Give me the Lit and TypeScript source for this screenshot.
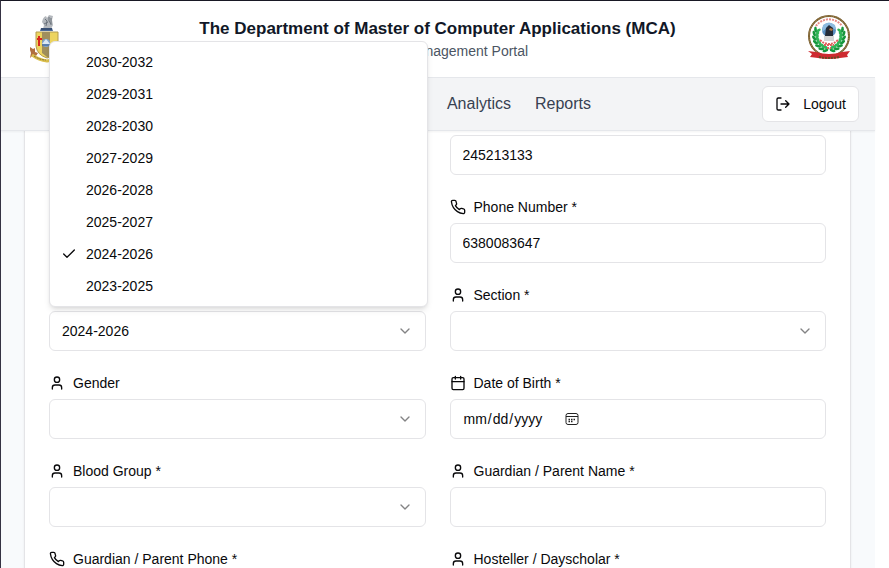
import { LitElement, html, css, svg, nothing } from "lit";
import { customElement, state } from "lit/decorators.js";

const shapes = {
  user: svg`<path d="M19 21v-2a4 4 0 0 0-4-4H9a4 4 0 0 0-4 4v2"/><circle cx="12" cy="7" r="4"/>`,
  phone: svg`<path d="M22 16.92v3a2 2 0 0 1-2.18 2 19.79 19.79 0 0 1-8.63-3.07 19.5 19.5 0 0 1-6-6 19.79 19.79 0 0 1-3.07-8.67A2 2 0 0 1 4.11 2h3a2 2 0 0 1 2 1.72 12.84 12.84 0 0 0 .7 2.81 2 2 0 0 1-.45 2.11L8.09 9.91a16 16 0 0 0 6 6l1.27-1.27a2 2 0 0 1 2.11-.45 12.84 12.84 0 0 0 2.81.7A2 2 0 0 1 22 16.92z"/>`,
  calendar: svg`<path d="M8 2v4M16 2v4M3 10h18"/><rect width="18" height="18" x="3" y="4" rx="2"/>`,
  logout: svg`<path d="M9 21H5a2 2 0 0 1-2-2V5a2 2 0 0 1 2-2h4M16 17l5-5-5-5M21 12H9"/>`,
  chevron: svg`<path d="m6 9 6 6 6-6"/>`,
  check: svg`<path d="M20 6 9 17l-5-5"/>`,
};

type IconName = keyof typeof shapes;

const icon = (name: IconName, extra = "") =>
  html`<svg class="icon ${extra}" viewBox="0 0 24 24" aria-hidden="true">${shapes[name]}</svg>`;

interface Field {
  id: string;
  label?: string;
  icon?: IconName;
  kind: "text" | "select" | "date" | "batch";
  value?: string;
}

const fields: Field[] = [
  { id: "register", kind: "text", value: "245213133" },
  { id: "phone", label: "Phone Number *", icon: "phone", kind: "text", value: "6380083647" },
  { id: "batch", kind: "batch" },
  { id: "section", label: "Section *", icon: "user", kind: "select" },
  { id: "gender", label: "Gender", icon: "user", kind: "select" },
  { id: "dob", label: "Date of Birth *", icon: "calendar", kind: "date" },
  { id: "blood", label: "Blood Group *", icon: "user", kind: "select" },
  { id: "guardian", label: "Guardian / Parent Name *", icon: "user", kind: "text" },
  { id: "guardian-phone", label: "Guardian / Parent Phone *", icon: "phone", kind: "text" },
  { id: "residence", label: "Hosteller / Dayscholar *", icon: "user", kind: "select" },
];

const batches = [
  "2030-2032", "2029-2031", "2028-2030", "2027-2029",
  "2026-2028", "2025-2027", "2024-2026", "2023-2025",
];

// Coat of arms: lion crest over a quartered shield with a ribbon below.
const universityCrest = html`
  <svg class="crest" viewBox="-4 1 40 48" role="img" aria-label="University crest">
    <path d="M14 8q1-5 4-6l1 2 2-3 4 1-1 4 1 5-2 4h-8l1-4z" fill="#b4b8bd"/>
    <path d="M17 5l2 2-1 5M21 3v4l2 3M16 10l4-2M23 4v7" stroke="#6b727b" fill="none"/>
    <path d="M13 14h11l1 3H12z" fill="#4c6a99"/>
    <path d="M13 15h11" stroke="#26374f"/>
    <path d="M8 18h22v14q-2 10-11 12Q9 41 8 32z" fill="#edd45f" stroke="#b39c50"/>
    <path d="M14 18h8v25h-3l-5-4z" fill="#a08f5c"/>
    <path d="M11 22v10M9 25h5" stroke="#d8281e" stroke-width="2"/>
    <circle cx="18" cy="29" r="4" fill="#7ea5cf"/>
    <path d="M14 30l4-5 4 5z" fill="#dce8f2"/>
    <path d="M14 31h8" stroke="#36598c"/>
    <path d="M2 33l3 2 2-1v4l3 1-2 3-3-1-3 3 1-5-1-3z" fill="#b0703f"/>
    <path d="M4 41q7 5 15 6 8-1 14-6" fill="none" stroke="#dcc04c" stroke-width="3"/>
    <path d="M6 42q6 4 12 4" fill="none" stroke="#7c6e30" stroke-dasharray="2 1"/>
  </svg>`;

const leaves = [0, 1, 2, 3, 4, 5, 6];
const wreathSide = svg`
  ${leaves.map((n) => {
    const turn = 14 + n * 17;
    return svg`<g transform="rotate(${turn} 22 22)">
      <ellipse cx="22" cy="34" rx="3" ry="1.4" transform="rotate(28 22 34)" fill="#2fb457"/>
      <ellipse cx="22" cy="37" rx="3" ry="1.4" transform="rotate(-28 22 37)" fill="#16963c"/>
    </g>`;
  })}`;

// Round seal: gold rim, laurel wreath, blue globe and red ribbon.
const collegeSeal = html`
  <svg class="seal" viewBox="0 0 44 50" role="img" aria-label="College seal">
    <circle cx="22" cy="22" r="20" fill="#fff" stroke="#70572b" stroke-width="2"/>
    <circle cx="22" cy="22" r="20" fill="none" stroke="#bd9c5d" stroke-dasharray="1 1"/>
    <path d="M9 12a16 16 0 0 1 26 0" fill="none" stroke="#e88a86" stroke-width="2" stroke-dasharray="2 1"/>
    ${svg`<g>${wreathSide}</g><g transform="translate(44 0) scale(-1 1)">${wreathSide}</g>`}
    <circle cx="22" cy="16" r="7" fill="#5b8fc1"/>
    <path d="M16 11q6-5 12 0l1 5-5-3-4 1-5 4z" fill="#8dbbdf"/>
    <path d="M19 14l3-3 4 3v8h-8z" fill="#252c38"/>
    <path d="M23 14l3 1-1 2-3-1z" fill="#b87541"/>
    <path d="M17 22h10v5H17z" fill="#d6d6d6"/>
    <path d="M13 26q4 4 9 4t9-4M17 31h10M20 34h4" fill="none" stroke="#e0605d" stroke-width="2" stroke-dasharray="2 1"/>
    <path d="M1 37l8 1q13 4 26 0l8-1-3 4 1 2-8 1q-11 2-22 0l-8-1 2-3z" fill="#ce2a30"/>
    <path d="M12 43q10 2 20 0" fill="none" stroke="#6c4925" stroke-width="2" stroke-dasharray="2 1"/>
  </svg>`;

@customElement("app-root")
export class AppRoot extends LitElement {
  @state() private batch = "2024-2026";
  @state() private menuOpen = true;

  static styles = css`
    :host {
      display: block;
      box-sizing: border-box;
      height: 100vh;
      overflow: hidden;
      padding-right: 14px;
      background: #fff;
      color: #09090b;
      font: 14px/20px "Liberation Sans", Arial, sans-serif;
    }
    :host::after {
      content: "";
      position: fixed;
      inset: 0;
      z-index: 3;
      border-top: 1px solid #181824;
      border-left: 1px solid #353243;
      pointer-events: none;
    }
    * { box-sizing: border-box; }
    .icon {
      flex: none;
      width: 16px;
      height: 16px;
      fill: none;
      stroke: currentColor;
      stroke-width: 2;
      stroke-linecap: round;
      stroke-linejoin: round;
    }
    .top { position: relative; z-index: 1; }
    .banner {
      display: flex;
      align-items: center;
      justify-content: space-between;
      height: 78px;
      padding: 0 24px;
      background: #fff;
      border-bottom: 1px solid #e5e7eb;
    }
    .logo { display: flex; width: 44px; }
    .crest { width: 40px; height: 48px; }
    .seal { width: 44px; height: 50px; }
    .titles { text-align: center; }
    .title {
      margin: 0;
      color: #111827;
      font-size: 17px;
      line-height: 24px;
      font-weight: 700;
    }
    .subtitle { margin: 0; color: #4b5563; line-height: 20px; }
    .bar {
      display: grid;
      grid-template-columns: 1fr auto 1fr;
      align-items: center;
      height: 53px;
      padding: 0 16px;
      background: #f3f4f6;
      border-bottom: 1px solid #e5e7eb;
      box-shadow: 0 1px 2px rgb(0 0 0 / 5%);
    }
    .links {
      grid-column: 2;
      display: flex;
      justify-content: flex-end;
      gap: 24px;
      min-width: 307px;
    }
    .link { color: #374151; font-size: 16px; line-height: 24px; text-decoration: none; }
    .logout {
      justify-self: end;
      display: flex;
      align-items: center;
      gap: 12px;
      height: 36px;
      padding: 0 12px;
      border: 1px solid #e4e4e7;
      border-radius: 6px;
      background: #fff;
      color: inherit;
      font: inherit;
    }
    .page { padding: 0 24px; background: #f8fafc; }
    /* The form is scrolled so that its first labels sit under the nav bar. */
    .card {
      display: grid;
      grid-template-columns: 1fr 1fr;
      gap: 24px;
      margin-top: -45px;
      padding: 24px;
      background: #fff;
      border: 1px solid #e4e4e7;
      border-radius: 8px;
      box-shadow: 0 1px 2px rgb(0 0 0 / 8%);
    }
    .field {
      position: relative;
      display: grid;
      grid-template-rows: 16px 40px;
      gap: 8px;
      min-width: 0;
    }
    .right { grid-column: 2; }
    .label { display: flex; align-items: center; gap: 8px; line-height: 16px; }
    .box { position: relative; grid-row: 2; }
    .control {
      width: 100%;
      height: 40px;
      padding: 8px 12px;
      border: 1px solid #e4e4e7;
      border-radius: 6px;
      background: #fff;
      color: inherit;
      font: inherit;
      appearance: none;
      outline: none;
    }
    .date { display: flex; }
    .date::-webkit-calendar-picker-indicator {
      background: url("data:image/svg+xml,%3Csvg xmlns='http://www.w3.org/2000/svg' viewBox='0 0 14 14' fill='none' stroke='%23222'%3E%3Crect x='1' y='1.5' width='12' height='11' rx='2'/%3E%3Cpath d='M1 4.5h12'/%3E%3Cpath d='M6 7.5h1.5M8.5 7.5H10M3.500 7.500H5M3.500 9.500H5M6 9.500h1.5' stroke-width='1.5'/%3E%3C/svg%3E") center / 14px 14px no-repeat;
    }
    .arrow {
      position: absolute;
      top: 12px;
      right: 13px;
      opacity: 0.5;
      pointer-events: none;
    }
    .menu {
      position: absolute;
      z-index: 2;
      left: 0;
      right: -2px;
      bottom: 44px;
      padding: 4px;
      background: #fff;
      border: 1px solid #e4e4e7;
      border-radius: 6px;
      box-shadow: 0 4px 6px -1px rgb(0 0 0 / 10%), 0 2px 4px -2px rgb(0 0 0 / 10%);
    }
    .option {
      display: flex;
      align-items: center;
      gap: 10px;
      width: 100%;
      height: 32px;
      padding: 0 8px;
      border: 0;
      border-radius: 4px;
      background: none;
      color: inherit;
      font: inherit;
    }
    .option:hover { background: #f4f4f5; }
    .mark { display: flex; justify-content: center; width: 14px; }
  `;

  private choose(value: string) {
    this.batch = value;
    this.menuOpen = false;
  }

  private openMenu(event: Event) {
    event.preventDefault();
    this.menuOpen = !this.menuOpen;
  }

  private renderMenu() {
    return html`<div class="menu" role="listbox" aria-label="Batch">
      ${batches.map((b) => html`
        <button class="option" type="button" role="option"
          aria-selected=${b === this.batch} @click=${() => this.choose(b)}>
          <span class="mark">${b === this.batch ? icon("check") : nothing}</span>${b}
        </button>`)}
    </div>`;
  }

  private renderControl(f: Field) {
    switch (f.kind) {
      case "batch":
        return html`
          <select class="control" id=${f.id} aria-label="Batch" @mousedown=${this.openMenu}>
            <option selected>${this.batch}</option>
          </select>
          ${icon("chevron", "arrow")}
          ${this.menuOpen ? this.renderMenu() : nothing}`;
      case "select":
        return html`
          <select class="control" id=${f.id}><option value=""></option></select>
          ${icon("chevron", "arrow")}`;
      case "date":
        return html`<input class="control date" id=${f.id} type="date">`;
      default:
        return html`<input class="control" id=${f.id} type="text" .value=${f.value ?? ""}
          aria-label=${f.label ?? "Register number"}>`;
    }
  }

  private renderField(f: Field, index: number) {
    return html`<div class="field ${index < 2 ? "right" : ""}">
      ${f.label
        ? html`<label class="label" for=${f.id}>${icon(f.icon!)}${f.label}</label>`
        : nothing}
      <div class="box">${this.renderControl(f)}</div>
    </div>`;
  }

  render() {
    return html`
      <div class="top">
        <header class="banner">
          <div class="logo">${universityCrest}</div>
          <div class="titles">
            <h1 class="title">The Department of Master of Computer Applications (MCA)</h1>
            <p class="subtitle">Students Management Portal</p>
          </div>
          <div class="logo">${collegeSeal}</div>
        </header>
        <nav class="bar">
          <div class="links">
            <a class="link" href="#analytics">Analytics</a>
            <a class="link" href="#reports">Reports</a>
          </div>
          <button class="logout" type="button">${icon("logout")}Logout</button>
        </nav>
      </div>
      <main class="page">
        <form class="card">${fields.map((f, i) => this.renderField(f, i))}</form>
      </main>`;
  }
}
